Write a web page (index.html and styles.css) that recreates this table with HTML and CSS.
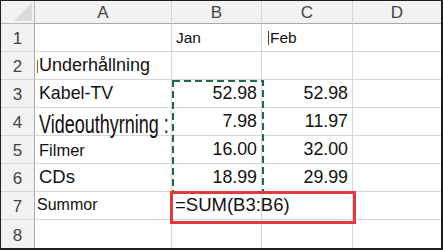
FILE: index.html
```html
<!DOCTYPE html>
<html>
<head>
<meta charset="utf-8">
<link rel="stylesheet" href="styles.css">
</head>
<body>
<div class="sheet">
  <div class="grid">
    <div class="corner"><svg class="tri" width="18" height="18" viewBox="0 0 18 18"><path d="M18 0 L18 18 L0 18 Z" fill="#dcdcdc"/></svg></div>
    <div class="colh">A</div>
    <div class="colh">B</div>
    <div class="colh">C</div>
    <div class="colh last">D</div>

    <div class="rowh">1</div>
    <div class="cell"></div>
    <div class="cell small"><span class="jan">Jan</span></div>
    <div class="cell small"><span class="tick"></span><span class="feb">Feb</span></div>
    <div class="cell last"></div>

    <div class="rowh">2</div>
    <div class="cell"><span class="tick orange"></span><span class="t2">Underhållning</span></div>
    <div class="cell"></div>
    <div class="cell"></div>
    <div class="cell last"></div>

    <div class="rowh">3</div>
    <div class="cell"><span class="t3">Kabel-TV</span></div>
    <div class="cell num">52.98</div>
    <div class="cell num">52.98</div>
    <div class="cell last"></div>

    <div class="rowh">4</div>
    <div class="cell clip"><span class="big">Videouthyrning :</span></div>
    <div class="cell num">7.98</div>
    <div class="cell num">11.97</div>
    <div class="cell last"></div>

    <div class="rowh">5</div>
    <div class="cell"><span class="t5">Filmer</span></div>
    <div class="cell num">16.00</div>
    <div class="cell num">32.00</div>
    <div class="cell last"></div>

    <div class="rowh">6</div>
    <div class="cell"><span class="t6">CDs</span></div>
    <div class="cell num">18.99</div>
    <div class="cell num">29.99</div>
    <div class="cell last"></div>

    <div class="rowh">7</div>
    <div class="cell"><span class="t7">Summor</span></div>
    <div class="cell formula">=SUM(B3:B6)</div>
    <div class="cell"></div>
    <div class="cell last"></div>

    <div class="rowh lastrow">8</div>
    <div class="cell lastrow"></div>
    <div class="cell lastrow"></div>
    <div class="cell lastrow"></div>
    <div class="cell last lastrow"></div>
  </div>
  <svg class="marquee" width="92" height="113" viewBox="0 0 92 113">
    <rect x="1" y="1" width="90" height="111" fill="none" stroke="#1f6b43" stroke-width="2" stroke-dasharray="7 4"/>
  </svg>
  <div class="redbox"></div>
</div>
</body>
</html>
```

FILE: styles.css
```css
* { box-sizing: border-box; }
html, body { margin: 0; padding: 0; background: #ffffff; }
.sheet {
  position: relative;
  width: 443px;
  height: 250px;
  border-top: 1px solid #1e1e1e;
  border-left: 1px solid #1e1e1e;
  border-right: 2px solid #1e1e1e;
  border-bottom: 2px solid #1e1e1e;
  overflow: hidden;
  font-family: "Liberation Sans", Arial, sans-serif;
  color: #111;
}
.grid {
  display: grid;
  grid-template-columns: 34px 137px 90px 91px 88px;
  grid-template-rows: 23px repeat(8, 28px);
}
.corner {
  background: #f2f2f2;
  border-right: 1px solid #b8b8b8;
  border-bottom: 1px solid #b8b8b8;
  display: flex;
  align-items: flex-end;
  justify-content: flex-end;
  padding: 0 2px 2px 0;
}
.colh {
  background: #f2f2f2;
  border-right: 1px solid #d6d6d6;
  border-bottom: 1px solid #a9a9a9;
  display: flex;
  align-items: center;
  justify-content: center;
  font-size: 17px;
  color: #444;
  padding-top: 1px;
}
.colh.last { border-right: none; }
.rowh {
  background: #f2f2f2;
  border-right: 1px solid #a9a9a9;
  border-bottom: 1px solid #d6d6d6;
  display: flex;
  align-items: center;
  justify-content: center;
  font-size: 17px;
  color: #444;
  padding-top: 3px;
}
.cell {
  border-right: 1px solid #d6d6d6;
  border-bottom: 1px solid #d6d6d6;
  display: flex;
  align-items: flex-end;
  padding: 0 4px 3px 4px;
  font-size: 17.8px;
  white-space: nowrap;
  min-width: 0;
}
.cell.last { border-right: none; }
.lastrow { border-bottom: none; }
.cell.num { justify-content: flex-end; padding-right: 4px; }
.cell.small { font-size: 15.5px; padding-bottom: 4px; }
.feb { margin-left: 1px; }
.tick {
  display: inline-block;
  width: 1px;
  height: 14px;
  background: #444;
  margin-bottom: 2px;
  margin-left: 2px;
}
.tick.orange { background: #c0561c; margin-left: -2px; margin-right: 1px; height: 13px; margin-bottom: 3px; }
.t2 { font-size: 18px; }
.t3 { font-size: 17.8px; }
.t5 { font-size: 16.5px; }
.t6 { font-size: 18.5px; }
.t7 { font-size: 16px; margin-left: -2px; padding-bottom: 2px; }
.clip { padding-bottom: 0; align-items: center; }
.big {
  display: inline-block;
  font-size: 25px;
  line-height: 28px;
  width: 130px;
  transform: scaleX(0.72);
  transform-origin: left center;
  position: relative;
  top: 2px;
}
.formula { overflow: visible; font-size: 18.5px; padding-left: 3px; }
.marquee {
  position: absolute;
  left: 171px;
  top: 79px;
}
.redbox {
  position: absolute;
  left: 169px;
  top: 190px;
  width: 186px;
  height: 33px;
  border: 3px solid #e0393e;
}
```
